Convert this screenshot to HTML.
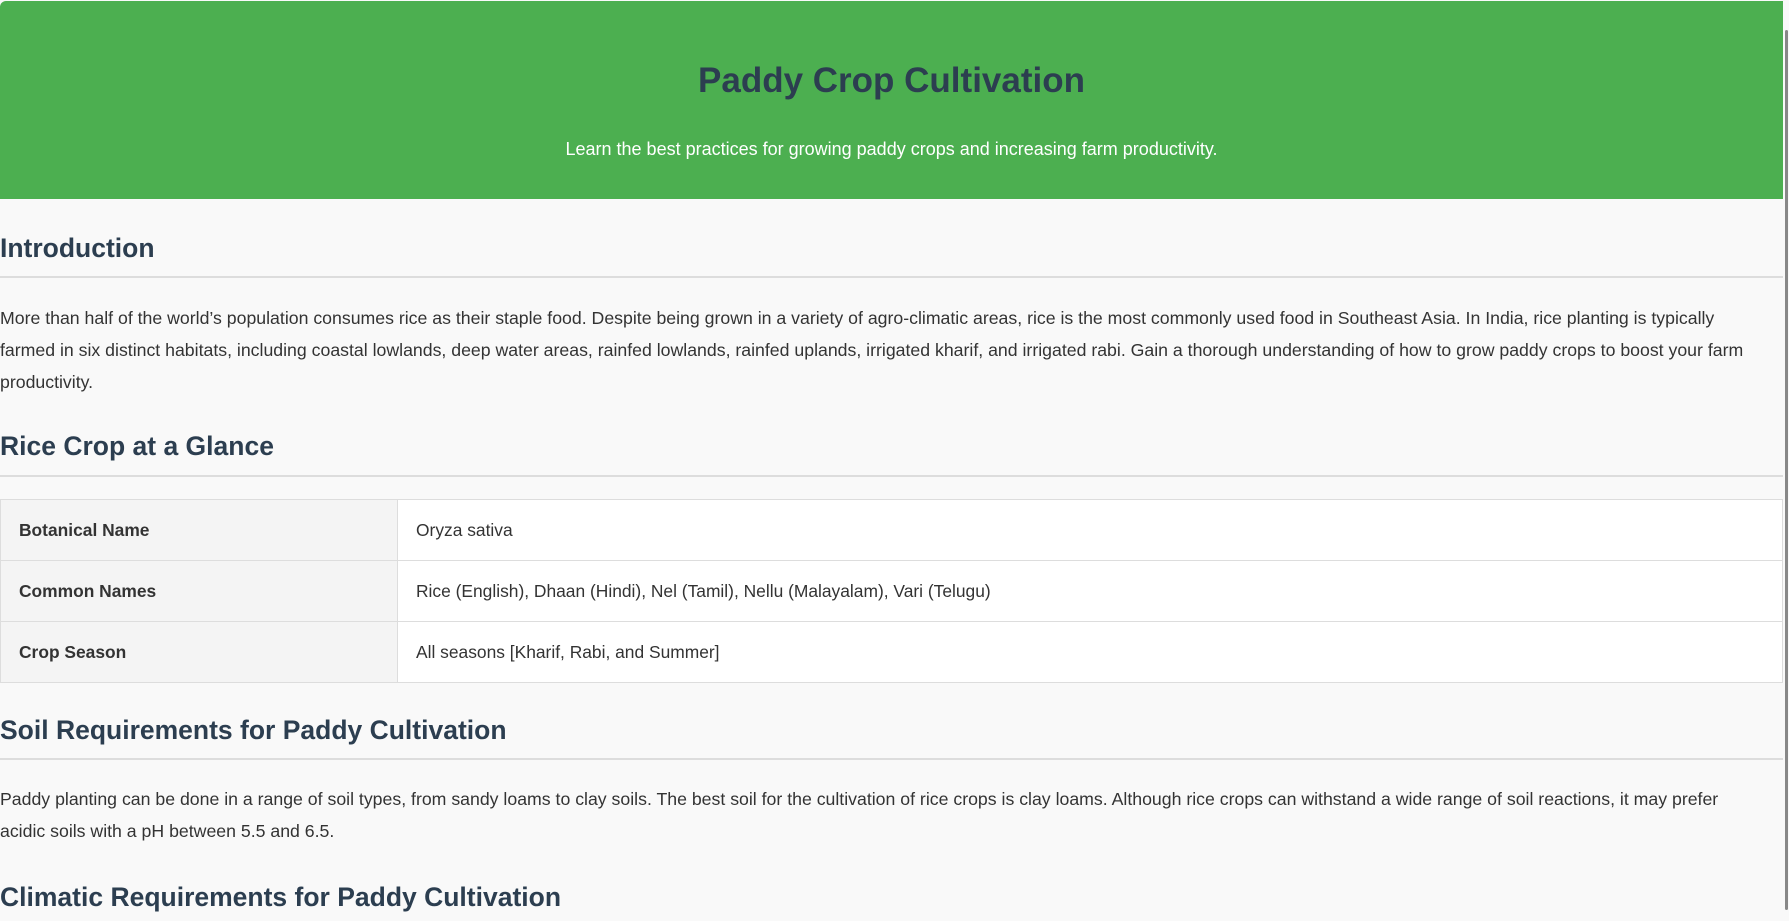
<!DOCTYPE html>
<html><head><meta charset="utf-8"><style>
html,body{margin:0;padding:0;}
body{width:1789px;height:921px;overflow:hidden;background:#f9f9f9;font-family:"Liberation Sans",sans-serif;color:#333;position:relative;}
.hdr{position:absolute;left:0;top:1px;width:1783px;height:198px;background:#4caf50;border-top-left-radius:6px;}
.t{position:absolute;left:0;width:1783px;text-align:center;}
h1{margin:0;font-size:35px;color:#2c3e50;font-weight:bold;}
.sub{font-size:18px;color:#fff;}
.h2{position:absolute;left:0;font-size:26.5px;font-weight:bold;color:#2c3e50;white-space:nowrap;line-height:30px;}
.hr{position:absolute;left:0;width:1783px;height:2px;background:#ddd;}
.p{position:absolute;left:0;font-size:17.7px;line-height:32px;white-space:nowrap;color:#333;}
table{position:absolute;left:0;top:499px;width:1783px;border-collapse:collapse;font-size:17.4px;background:#fff;}
td{border:1px solid #ddd;padding:0 18px;height:60px;}
td.l{background:#f4f4f4;font-weight:bold;width:360px;}
.sb{position:absolute;right:0;top:0;width:6px;height:921px;background:#f9f9f9;}
.sbt{position:absolute;right:1px;top:30px;width:3px;height:880px;background:#888;border-radius:2px;}
</style></head><body>
<div class="hdr"></div>
<div class="t" style="top:61px"><h1>Paddy Crop Cultivation</h1></div>
<div class="t sub" style="top:139px">Learn the best practices for growing paddy crops and increasing farm productivity.</div>

<div class="h2" style="top:233px">Introduction</div>
<div class="hr" style="top:276px"></div>
<div class="p" style="top:302px">More than half of the world’s population consumes rice as their staple food. Despite being grown in a variety of agro-climatic areas, rice is the most commonly used food in Southeast Asia. In India, rice planting is typically<br>farmed in six distinct habitats, including coastal lowlands, deep water areas, rainfed lowlands, rainfed uplands, irrigated kharif, and irrigated rabi. Gain a thorough understanding of how to grow paddy crops to boost your farm<br>productivity.</div>

<div class="h2" style="top:431px">Rice Crop at a Glance</div>
<div class="hr" style="top:475px"></div>
<table>
<tr><td class="l">Botanical Name</td><td>Oryza sativa</td></tr>
<tr><td class="l">Common Names</td><td>Rice (English), Dhaan (Hindi), Nel (Tamil), Nellu (Malayalam), Vari (Telugu)</td></tr>
<tr><td class="l">Crop Season</td><td>All seasons [Kharif, Rabi, and Summer]</td></tr>
</table>

<div class="h2" style="top:715px">Soil Requirements for Paddy Cultivation</div>
<div class="hr" style="top:758px"></div>
<div class="p" style="top:783px">Paddy planting can be done in a range of soil types, from sandy loams to clay soils. The best soil for the cultivation of rice crops is clay loams. Although rice crops can withstand a wide range of soil reactions, it may prefer<br>acidic soils with a pH between 5.5 and 6.5.</div>

<div class="h2" style="top:882px">Climatic Requirements for Paddy Cultivation</div>
<div class="sb"></div><div class="sbt"></div>
</body></html>
